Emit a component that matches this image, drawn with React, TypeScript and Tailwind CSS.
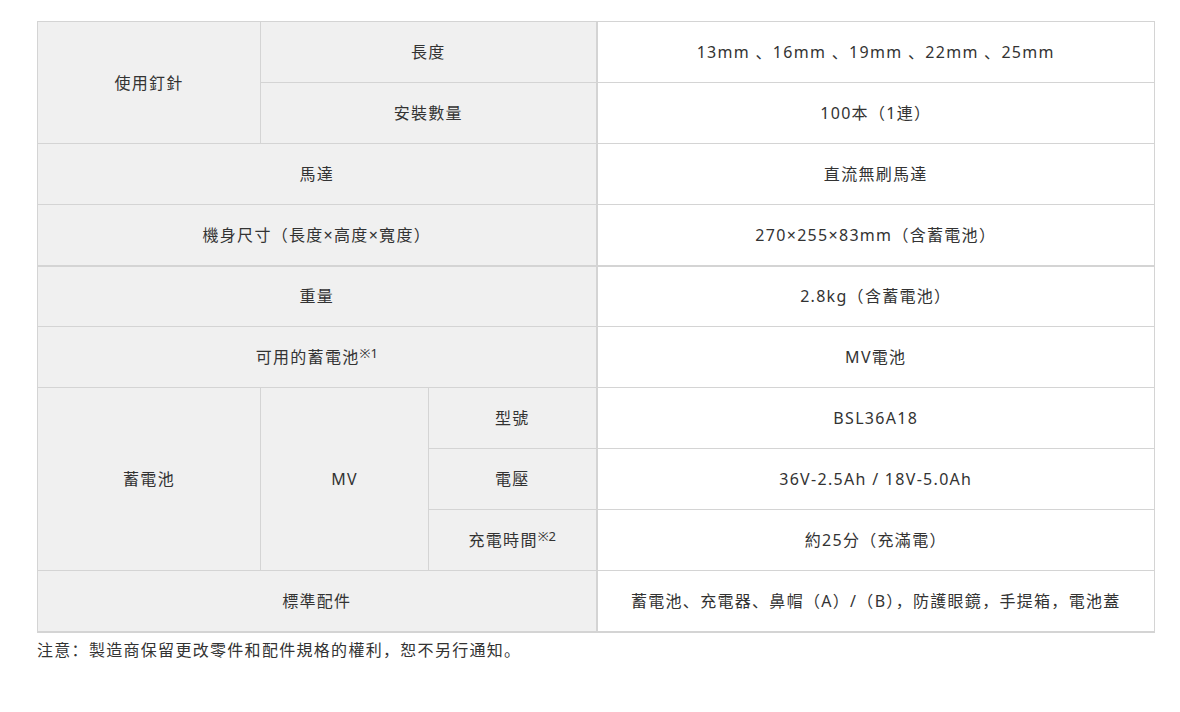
import React from 'react';

const th = 'bg-[#f0f0f0] border border-[#d4d4d4] text-center align-middle font-normal';
const td = 'bg-white border border-[#d4d4d4] border-l-2 text-center align-middle';

function Note({ n }: { n: number }) {
  return <sup className="relative -top-[5px] text-[13px] align-baseline tracking-normal">※{n}</sup>;
}

export default function App() {
  return (
    <div
      className="min-h-[712px] bg-white pt-[21px] pl-[37px] text-[16px] leading-[24px] tracking-[1.3px] text-[#333]"
      style={{ fontFamily: '"Noto Sans", "Noto Sans CJK SC", sans-serif' }}
    >
      <table className="w-[1117px] table-fixed border-collapse border-b-2 border-[#d4d4d4]">
        <colgroup>
          <col className="w-[223px]" />
          <col className="w-[168px]" />
          <col className="w-[168px]" />
          <col className="w-[558px]" />
        </colgroup>
        <tbody>
          <tr className="h-[61px]">
            <th rowSpan={2} className={th}>使用釘針</th>
            <th colSpan={2} className={th}>長度</th>
            <td className={td}>13mm 、16mm 、19mm 、22mm 、25mm</td>
          </tr>
          <tr className="h-[61px]">
            <th colSpan={2} className={th}>安裝數量</th>
            <td className={td}>100本（1連）</td>
          </tr>
          <tr className="h-[61px]">
            <th colSpan={3} className={th}>馬達</th>
            <td className={td}>直流無刷馬達</td>
          </tr>
          <tr className="h-[61px]">
            <th colSpan={3} className={`${th} border-b-2`}>機身尺寸（長度×高度×寬度）</th>
            <td className={`${td} border-b-2`}>270×255×83mm（含蓄電池）</td>
          </tr>
          <tr className="h-[61px]">
            <th colSpan={3} className={th}>重量</th>
            <td className={td}>2.8kg（含蓄電池）</td>
          </tr>
          <tr className="h-[61px]">
            <th colSpan={3} className={th}>
              可用的蓄電池<Note n={1} />
            </th>
            <td className={td}>MV電池</td>
          </tr>
          <tr className="h-[61px]">
            <th rowSpan={3} className={th}>蓄電池</th>
            <th rowSpan={3} className={th}>MV</th>
            <th className={th}>型號</th>
            <td className={td}>BSL36A18</td>
          </tr>
          <tr className="h-[61px]">
            <th className={th}>電壓</th>
            <td className={td}>36V-2.5Ah / 18V-5.0Ah</td>
          </tr>
          <tr className="h-[61px]">
            <th className={th}>
              充電時間<Note n={2} />
            </th>
            <td className={td}>約25分（充滿電）</td>
          </tr>
          <tr className="h-[61px]">
            <th colSpan={3} className={`${th} border-b-2`}>標準配件</th>
            <td className={`${td} border-b-2`}>蓄電池、充電器、鼻帽（A）/（B），防護眼鏡，手提箱，電池蓋</td>
          </tr>
        </tbody>
      </table>
      <p className="mt-[5px]">注意：製造商保留更改零件和配件規格的權利，恕不另行通知。</p>
    </div>
  );
}
